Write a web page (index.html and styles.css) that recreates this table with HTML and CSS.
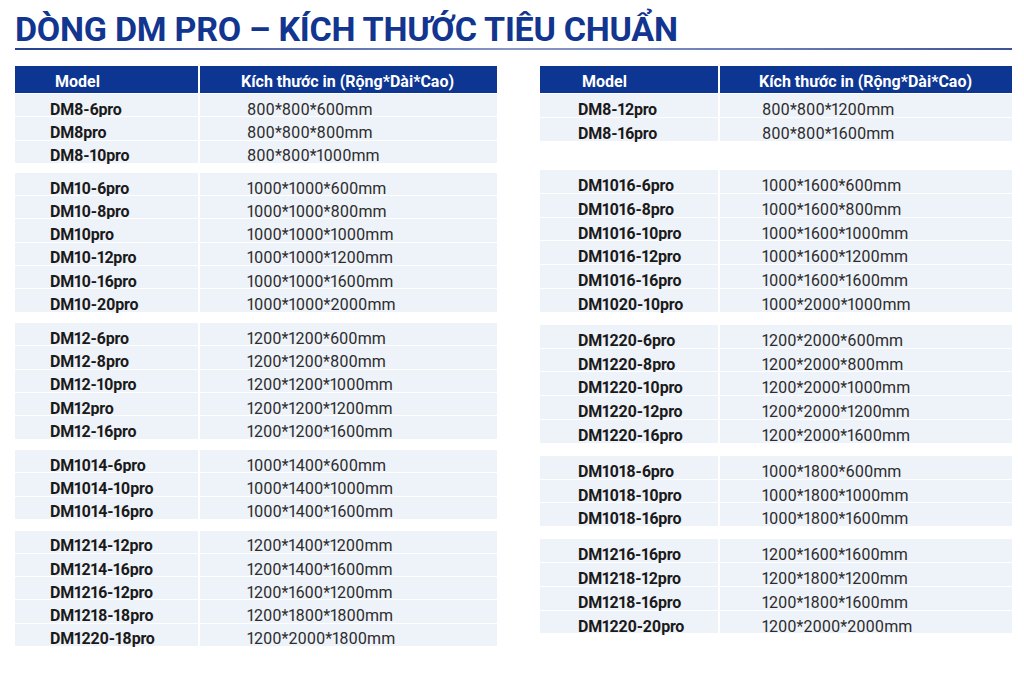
FILE: index.html
```html
<!DOCTYPE html>
<html lang="vi">
<head>
<meta charset="utf-8">
<title>Dòng DM PRO – Kích thước tiêu chuẩn</title>
<link rel="stylesheet" href="styles.css">
</head>
<body>
<div class="page">
  <h1 class="title">DÒNG DM PRO – KÍCH THƯỚC TIÊU CHUẨN</h1>
  <div class="rule"></div>
  <div class="tables">
    <div class="tbl tbl-left">
      <div class="thead"><div class="th th-model">Model</div><div class="th th-size">Kích thước in (Rộng*Dài*Cao)</div></div>
      <div class="grp">
        <div class="m">DM8-6pro</div><div class="s">800*800*600mm</div>
        <div class="m">DM8pro</div><div class="s">800*800*800mm</div>
        <div class="m">DM8-10pro</div><div class="s">800*800*1000mm</div>
      </div>
      <div class="grp gap-a">
        <div class="m">DM10-6pro</div><div class="s">1000*1000*600mm</div>
        <div class="m">DM10-8pro</div><div class="s">1000*1000*800mm</div>
        <div class="m">DM10pro</div><div class="s">1000*1000*1000mm</div>
        <div class="m">DM10-12pro</div><div class="s">1000*1000*1200mm</div>
        <div class="m">DM10-16pro</div><div class="s">1000*1000*1600mm</div>
        <div class="m">DM10-20pro</div><div class="s">1000*1000*2000mm</div>
      </div>
      <div class="grp gap-b">
        <div class="m">DM12-6pro</div><div class="s">1200*1200*600mm</div>
        <div class="m">DM12-8pro</div><div class="s">1200*1200*800mm</div>
        <div class="m">DM12-10pro</div><div class="s">1200*1200*1000mm</div>
        <div class="m">DM12pro</div><div class="s">1200*1200*1200mm</div>
        <div class="m">DM12-16pro</div><div class="s">1200*1200*1600mm</div>
      </div>
      <div class="grp gap-b">
        <div class="m">DM1014-6pro</div><div class="s">1000*1400*600mm</div>
        <div class="m">DM1014-10pro</div><div class="s">1000*1400*1000mm</div>
        <div class="m">DM1014-16pro</div><div class="s">1000*1400*1600mm</div>
      </div>
      <div class="grp gap-b">
        <div class="m">DM1214-12pro</div><div class="s">1200*1400*1200mm</div>
        <div class="m">DM1214-16pro</div><div class="s">1200*1400*1600mm</div>
        <div class="m">DM1216-12pro</div><div class="s">1200*1600*1200mm</div>
        <div class="m">DM1218-18pro</div><div class="s">1200*1800*1800mm</div>
        <div class="m">DM1220-18pro</div><div class="s">1200*2000*1800mm</div>
      </div>
    </div>

    <div class="tbl tbl-right">
      <div class="thead"><div class="th th-model">Model</div><div class="th th-size">Kích thước in (Rộng*Dài*Cao)</div></div>
      <div class="grp">
        <div class="m">DM8-12pro</div><div class="s">800*800*1200mm</div>
        <div class="m">DM8-16pro</div><div class="s">800*800*1600mm</div>
      </div>
      <div class="grp gap-lg">
        <div class="m">DM1016-6pro</div><div class="s">1000*1600*600mm</div>
        <div class="m">DM1016-8pro</div><div class="s">1000*1600*800mm</div>
        <div class="m">DM1016-10pro</div><div class="s">1000*1600*1000mm</div>
        <div class="m">DM1016-12pro</div><div class="s">1000*1600*1200mm</div>
        <div class="m">DM1016-16pro</div><div class="s">1000*1600*1600mm</div>
        <div class="m">DM1020-10pro</div><div class="s">1000*2000*1000mm</div>
      </div>
      <div class="grp gap-b">
        <div class="m">DM1220-6pro</div><div class="s">1200*2000*600mm</div>
        <div class="m">DM1220-8pro</div><div class="s">1200*2000*800mm</div>
        <div class="m">DM1220-10pro</div><div class="s">1200*2000*1000mm</div>
        <div class="m">DM1220-12pro</div><div class="s">1200*2000*1200mm</div>
        <div class="m">DM1220-16pro</div><div class="s">1200*2000*1600mm</div>
      </div>
      <div class="grp gap-b">
        <div class="m">DM1018-6pro</div><div class="s">1000*1800*600mm</div>
        <div class="m">DM1018-10pro</div><div class="s">1000*1800*1000mm</div>
        <div class="m">DM1018-16pro</div><div class="s">1000*1800*1600mm</div>
      </div>
      <div class="grp gap-b">
        <div class="m">DM1216-16pro</div><div class="s">1200*1600*1600mm</div>
        <div class="m">DM1218-12pro</div><div class="s">1200*1800*1200mm</div>
        <div class="m">DM1218-16pro</div><div class="s">1200*1800*1600mm</div>
        <div class="m">DM1220-20pro</div><div class="s">1200*2000*2000mm</div>
      </div>
    </div>
  </div>
</div>
</body>
</html>
```

FILE: styles.css
```css
html, body {
  margin: 0;
  padding: 0;
  background: #ffffff;
}

body {
  font-family: Roboto, "Noto Sans", "Liberation Sans", sans-serif;
  color: #1b1b1b;
}

.page {
  width: 1024px;
  height: 683px;
  box-sizing: border-box;
  padding: 0 12px 0 15px;
  overflow: hidden;
}

.title {
  margin: 0;
  padding-top: 9px;
  font-size: 34px;
  line-height: 40px;
  font-weight: 700;
  color: #12358f;
  letter-spacing: -0.25px;
  white-space: nowrap;
}

.rule {
  height: 2px;
  margin-top: -1px;
  background: linear-gradient(90deg, #24408f 0%, #5a6fae 30%, #8797c6 50%, #6a7db6 75%, #3d5399 100%);
}

.tables {
  display: flex;
  justify-content: space-between;
  margin-top: 16px;
}

.tbl-left { width: 482px; }
.tbl-right { width: 472px; }

.thead,
.grp {
  display: grid;
  column-gap: 2px;
}

.tbl-left .thead,
.tbl-left .grp { grid-template-columns: 183px 1fr; }

.tbl-right .thead,
.tbl-right .grp { grid-template-columns: 178px 1fr; }

.thead {
  height: 27px;
  margin-bottom: 1px;
}

.th {
  background: #0d3592;
  color: #ffffff;
  font-weight: 700;
  font-size: 16px;
  display: flex;
  align-items: center;
  box-sizing: border-box;
  padding-top: 4px;
}

.tbl-left .th-model { padding-left: 40px; }
.tbl-left .th-size { padding-left: 41px; }
.tbl-right .th-model { padding-left: 42px; }
.tbl-right .th-size { padding-left: 39px; }

.grp {
  row-gap: 1px;
}

.m, .s {
  background: #eef2f9;
  display: flex;
  align-items: center;
  box-sizing: border-box;
  padding-top: 8px;
  font-size: 16px;
  white-space: nowrap;
  font-variant-numeric: proportional-nums;
}

.tbl-left .m, .tbl-left .s { height: 22.3px; }
.tbl-right .m, .tbl-right .s { height: 22.8px; }

.m {
  font-weight: 700;
  color: #1a1a1a;
  letter-spacing: -0.2px;
}

.s {
  font-weight: 400;
  color: #2c2c2c;
  letter-spacing: 0;
}

.tbl-left .m { padding-left: 35px; }
.tbl-left .s { padding-left: 47px; }
.tbl-right .m { padding-left: 38px; }
.tbl-right .s { padding-left: 42px; }

.tbl-left .gap-a { margin-top: 10px; }
.tbl-left .gap-b { margin-top: 11.5px; }
.tbl-right .gap-lg { margin-top: 29.5px; }
.tbl-right .gap-b { margin-top: 13px; }
```
